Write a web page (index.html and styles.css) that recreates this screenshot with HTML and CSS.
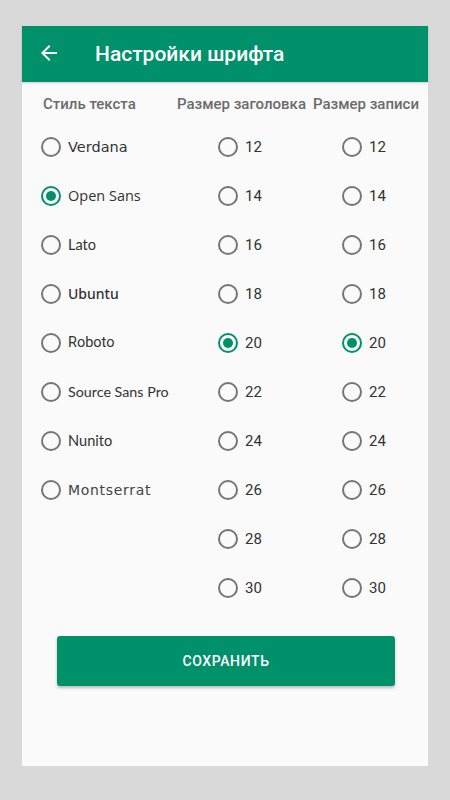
FILE: index.html
```html
<!DOCTYPE html>
<html lang="ru">
<head>
<meta charset="utf-8">
<title>Настройки шрифта</title>
<link rel="stylesheet" href="styles.css">
</head>
<body>
<div class="screen">
  <header class="toolbar">
    <svg class="back" viewBox="0 0 24 24" width="24" height="24"><path fill="#fff" d="M20 11H7.83l5.59-5.59L12 4l-8 8 8 8 1.41-1.41L7.83 13H20v-2z"/></svg>
    <h1 class="title">Настройки шрифта</h1>
  </header>
  <main class="content">
    <div class="columns">
      <section class="col col-style">
        <div class="col-head">Стиль текста</div>
        <ul class="list">
          <li class="row"><span class="radio"></span><span class="lbl f-verdana">Verdana</span></li>
          <li class="row"><span class="radio on"></span><span class="lbl f-open">Open Sans</span></li>
          <li class="row"><span class="radio"></span><span class="lbl f-lato">Lato</span></li>
          <li class="row"><span class="radio"></span><span class="lbl f-ubuntu">Ubuntu</span></li>
          <li class="row"><span class="radio"></span><span class="lbl f-roboto">Roboto</span></li>
          <li class="row"><span class="radio"></span><span class="lbl f-source">Source Sans Pro</span></li>
          <li class="row"><span class="radio"></span><span class="lbl f-nunito">Nunito</span></li>
          <li class="row"><span class="radio"></span><span class="lbl f-mont">Montserrat</span></li>
        </ul>
      </section>
      <section class="col col-head-size">
        <div class="col-head">Размер заголовка</div>
        <ul class="list">
          <li class="row"><span class="radio"></span><span class="lbl">12</span></li>
          <li class="row"><span class="radio"></span><span class="lbl">14</span></li>
          <li class="row"><span class="radio"></span><span class="lbl">16</span></li>
          <li class="row"><span class="radio"></span><span class="lbl">18</span></li>
          <li class="row"><span class="radio on"></span><span class="lbl">20</span></li>
          <li class="row"><span class="radio"></span><span class="lbl">22</span></li>
          <li class="row"><span class="radio"></span><span class="lbl">24</span></li>
          <li class="row"><span class="radio"></span><span class="lbl">26</span></li>
          <li class="row"><span class="radio"></span><span class="lbl">28</span></li>
          <li class="row"><span class="radio"></span><span class="lbl">30</span></li>
        </ul>
      </section>
      <section class="col col-rec-size">
        <div class="col-head">Размер записи</div>
        <ul class="list">
          <li class="row"><span class="radio"></span><span class="lbl">12</span></li>
          <li class="row"><span class="radio"></span><span class="lbl">14</span></li>
          <li class="row"><span class="radio"></span><span class="lbl">16</span></li>
          <li class="row"><span class="radio"></span><span class="lbl">18</span></li>
          <li class="row"><span class="radio on"></span><span class="lbl">20</span></li>
          <li class="row"><span class="radio"></span><span class="lbl">22</span></li>
          <li class="row"><span class="radio"></span><span class="lbl">24</span></li>
          <li class="row"><span class="radio"></span><span class="lbl">26</span></li>
          <li class="row"><span class="radio"></span><span class="lbl">28</span></li>
          <li class="row"><span class="radio"></span><span class="lbl">30</span></li>
        </ul>
      </section>
    </div>
    <button class="save">СОХРАНИТЬ</button>
  </main>
</div>
</body>
</html>
```
FILE: styles.css
```css
html, body {
  margin: 0;
  padding: 0;
  background: #d9d9d9;
}
body {
  padding: 26px 22px 34px;
  font-family: Roboto, "Liberation Sans", sans-serif;
}
.screen {
  width: 406px;
  height: 740px;
  background: #fafafa;
  display: flex;
  flex-direction: column;
}
.toolbar {
  height: 56px;
  background: #00916a;
  display: flex;
  align-items: center;
  padding-left: 15px;
  box-shadow: 0 1px 2px rgba(0,0,0,0.18);
  position: relative;
  z-index: 1;
}
.back {
  display: block;
  margin-top: -2px;
}
.title {
  margin: -1px 0 0 34px;
  color: #fff;
  font-family: Roboto, sans-serif;
  font-weight: 500;
  font-size: 21px;
  line-height: 24px;
}
.content {
  padding-top: 12px;
  display: flex;
  flex-direction: column;
}
.columns {
  display: flex;
}
.col-style { width: 150px; }
.col-head-size { width: 136px; }
.col-rec-size { width: 120px; }
.col-head {
  font-family: Roboto, sans-serif;
  font-weight: 500;
  font-size: 15px;
  line-height: 20px;
  color: #6b6b6b;
  margin-bottom: 8px;
  white-space: nowrap;
}
.col-style .col-head { padding-left: 21px; }
.col-head-size .col-head { padding-left: 5px; }
.col-rec-size .col-head { padding-left: 5px; }
.list {
  list-style: none;
  margin: 0;
  padding: 0;
}
.col-style .list { padding-left: 19px; }
.col-head-size .list { padding-left: 46px; }
.col-rec-size .list { padding-left: 34px; }
.row {
  height: 49px;
  display: flex;
  align-items: center;
  gap: 7px;
}
.radio {
  width: 20px;
  height: 20px;
  box-sizing: border-box;
  border: 2px solid #767676;
  border-radius: 50%;
  flex: none;
  display: flex;
  align-items: center;
  justify-content: center;
}
.radio.on {
  border-color: #00916a;
}
.radio.on::after {
  content: "";
  width: 10px;
  height: 10px;
  border-radius: 50%;
  background: #00916a;
}
.lbl {
  font-family: Roboto, sans-serif;
  font-size: 15px;
  color: #333;
  white-space: nowrap;
}
.f-verdana { font-family: "DejaVu Sans", sans-serif; font-size: 14.5px; }
.f-open { font-family: "Open Sans", sans-serif; font-size: 14.5px; }
.f-lato { font-family: Lato, sans-serif; font-size: 14.5px; }
.f-ubuntu { font-family: "Noto Sans", sans-serif; font-size: 14px; font-weight: 500; }
.f-roboto { font-family: Roboto, sans-serif; font-size: 14.5px; }
.f-source { font-family: Lato, sans-serif; font-size: 14.3px; }
.f-nunito { font-family: Lato, sans-serif; font-size: 14.6px; }
.f-mont { font-family: "DejaVu Sans", sans-serif; font-size: 14px; letter-spacing: 0.7px; color: #444; }
.save {
  margin: 24px 0 0 35px;
  width: 338px;
  height: 50px;
  border: none;
  border-radius: 3px;
  background: #00916a;
  color: #fff;
  font-family: Roboto, sans-serif;
  font-weight: 500;
  font-size: 14px;
  letter-spacing: 0.6px;
  box-shadow: 0 2px 3px rgba(0,0,0,0.25);
}
```
